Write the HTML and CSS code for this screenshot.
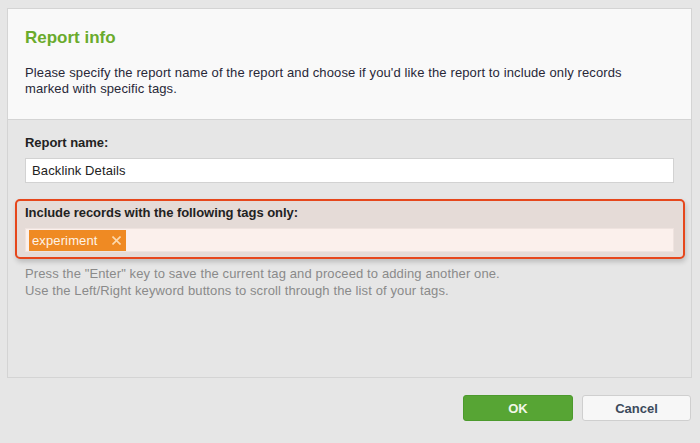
FILE: index.html
```html
<!DOCTYPE html>
<html>
<head>
<meta charset="utf-8">
<link rel="stylesheet" href="styles.css">
</head>
<body>
<div class="panel">
  <div class="header">
    <h1 class="title">Report info</h1>
    <p class="desc">Please specify the report name of the report and choose if you'd like the report to include only records marked with specific tags.</p>
  </div>
  <div class="body">
    <div class="label">Report name:</div>
    <div class="input">Backlink Details</div>
    <div class="focus-box">
      <div class="label">Include records with the following tags only:</div>
      <div class="tag-input">
        <span class="tag">experiment<svg class="tag-x" width="9" height="9" viewBox="0 0 9 9"><path d="M0.5 0.5 L8.5 8.5 M8.5 0.5 L0.5 8.5" stroke="#fcd9ae" stroke-width="1.6" fill="none"/></svg></span>
      </div>
    </div>
    <div class="hint">Press the "Enter" key to save the current tag and proceed to adding another one.<br>Use the Left/Right keyword buttons to scroll through the list of your tags.</div>
  </div>
</div>
<div class="footer">
  <button class="btn btn-ok">OK</button>
  <button class="btn btn-cancel">Cancel</button>
</div>
</body>
</html>
```

FILE: styles.css
```css
* { box-sizing: border-box; }
html, body { margin: 0; }
body {
  background: #e6e6e6;
  font-family: "Liberation Sans", Arial, sans-serif;
  font-size: 13px;
  letter-spacing: 0.12px;
  color: #262636;
  padding: 8px 8px 0 7px;
  width: 700px;
  height: 443px;
  overflow: hidden;
}
.panel {
  border: 1px solid #d4d4d4;
  height: 370px;
  display: flex;
  flex-direction: column;
}
.header {
  background: #f9f9f9;
  border-bottom: 1px solid #d4d4d4;
  padding: 19px 17px 22px 17px;
}
.title {
  margin: 0;
  font-size: 17px;
  line-height: 20px;
  font-weight: bold;
  letter-spacing: 0;
  color: #6aab2c;
}
.desc {
  margin: 17px 0 0;
  max-width: 640px;
  line-height: 16px;
  color: #282838;
}
.body {
  flex: 1;
  padding: 15px 17px 0 17px;
}
.label {
  font-weight: bold;
  line-height: 16px;
  letter-spacing: -0.05px;
  color: #222;
}
.input {
  margin-top: 7px;
  height: 25px;
  background: #fff;
  border: 1px solid #d2d2d2;
  padding: 0 6px;
  line-height: 23px;
  color: #222;
}
.focus-box {
  margin: 16px -11px 0 -10px;
  border: 2px solid #e6471c;
  border-radius: 5px;
  background: #e5dbd7;
  padding: 4px 9px 5px 8px;
  box-shadow: 1px 3px 5px rgba(0,0,0,0.18);
}
.tag-input {
  margin-top: 7px;
  height: 24px;
  background: #fbf0ec;
  border: 1px solid #efe3df;
  padding: 1px 3px;
  display: flex;
  align-items: center;
}
.tag {
  display: inline-flex;
  align-items: center;
  height: 21px;
  width: 97px;
  background: #ef8a23;
  color: #fdf3e8;
  padding: 0 3px;
  font-size: 13px;
}
.tag-x {
  margin-left: 14px;
  flex: none;
}
.hint {
  margin-top: 6px;
  line-height: 17px;
  color: #8a8a8a;
}
.footer {
  display: flex;
  justify-content: flex-end;
  gap: 9px;
  padding-top: 17px;
  padding-right: 1px;
}
.btn {
  height: 26px;
  border-radius: 3px;
  font-family: "Liberation Sans", Arial, sans-serif;
  font-size: 13px;
  font-weight: bold;
  padding: 0;
}
.btn-ok {
  width: 110px;
  background: #57a534;
  border: 1px solid #4c9a2d;
  color: #f2f7e8;
}
.btn-cancel {
  width: 109px;
  background: #f7f7f7;
  border: 1px solid #cfcfcf;
  color: #3c4a5c;
}
```
